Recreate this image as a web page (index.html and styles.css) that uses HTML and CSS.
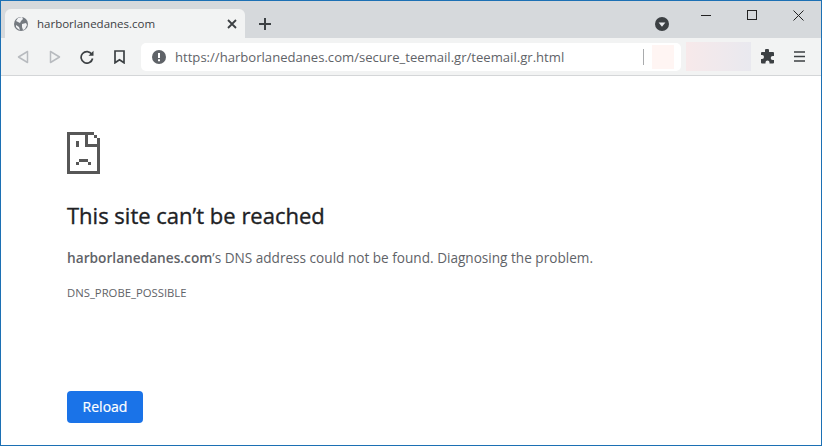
FILE: index.html
```
<!DOCTYPE html>
<html lang="en">
<head>
<meta charset="utf-8">
<title>harborlanedanes.com</title>
<link rel="stylesheet" href="styles.css">
</head>
<body>
<div class="window">
  <header class="titlebar">
    <div class="tab">
      <svg class="tab-globe" width="16" height="16" viewBox="0 0 16 16"><circle cx="8" cy="8" r="7" fill="#757a80"/><path d="M3 5l2-3 4-1 1 2-2 2-1 2-2-1zM9 8l4-1 1 2-2 4-2 1-1-3zM3 9l3 2 1 3-2-1-2-2z" fill="#f2f3f5"/></svg>
      <span class="tab-title">harborlanedanes.com</span>
      <svg class="tab-close" width="10" height="10" viewBox="0 0 10 10"><path d="M1 1l8 8M9 1l-8 8" stroke="#3c4043" stroke-width="1.8" fill="none"/></svg>
    </div>
    <svg class="new-tab" width="14" height="14" viewBox="0 0 14 14"><path d="M7 1v12M1 7h12" stroke="#3c4043" stroke-width="2" fill="none"/></svg>
    <svg class="profile-drop" width="14" height="14" viewBox="0 0 14 14"><circle cx="7" cy="7" r="7" fill="#3c4043"/><path d="M3.6 5.4h6.8L7 9.8z" fill="#e8eaed"/></svg>
    <div class="win-controls">
      <svg width="10" height="10" viewBox="0 0 10 10"><path d="M0 5.5h10" stroke="#222" fill="none"/></svg>
      <svg width="10" height="10" viewBox="0 0 10 10"><rect x=".5" y=".5" width="9" height="9" stroke="#222" fill="none"/></svg>
      <svg width="11" height="11" viewBox="0 0 11 11"><path d="M.5.5l10 10M10.500.5l-10 10" stroke="#222" fill="none"/></svg>
    </div>
  </header>
  <nav class="toolbar">
    <svg class="tool tool-back" width="12" height="14" viewBox="0 0 12 14"><path d="M10.500 1.500v11L1.500 7z" stroke="#b8bbbf" stroke-width="1.500" fill="none" stroke-linejoin="round"/></svg>
    <svg class="tool tool-forward" width="12" height="14" viewBox="0 0 12 14"><path d="M1.500 1.500v11l9-5.500z" stroke="#b8bbbf" stroke-width="1.500" fill="none" stroke-linejoin="round"/></svg>
    <svg class="tool tool-reload" width="14" height="14" viewBox="0 0 14 14"><path d="M11.800 4.200A5.800 5.800 0 1 0 12.600 8.500" stroke="#3c4043" stroke-width="1.700" fill="none"/><path d="M13.500 .8v5h-5z" fill="#3c4043"/></svg>
    <svg class="tool tool-bookmark" width="11" height="14" viewBox="0 0 11 14"><path d="M1 1h9v11.800L5.500 9.800 1 12.800z" stroke="#3c4043" stroke-width="1.700" fill="none"/></svg>
    <div class="omnibox">
      <svg class="info" width="14" height="14" viewBox="0 0 14 14"><circle cx="7" cy="7" r="7" fill="#5f6368"/><path d="M6 3h2v5H6zM6 9.300h2v2H6z" fill="#fff"/></svg>
      <span class="url">https://harborlanedanes.com/secure_teemail.gr/teemail.gr.html</span>
      <span class="omni-sep"></span>
      <span class="omni-blur"></span>
    </div>
    <div class="ext-blur"></div>
    <svg class="tool-puzzle" width="15" height="15" viewBox="0 0 15 15"><path d="M5 1.500a2 2 0 0 1 4 0V3h4a1 1 0 0 1 1 1v3h-1.300a2 2 0 0 0 0 4H14v2.500a1 1 0 0 1-1 1H9.500v-1a2 2 0 0 0-4 0v1H2a1 1 0 0 1-1-1V10h1a2 2 0 0 0 0-4H1V4a1 1 0 0 1 1-1h3z" fill="#3c4043"/></svg>
    <svg class="tool-menu" width="11" height="11" viewBox="0 0 11 11"><path d="M0 1h11M0 5.500h11M0 10h11" stroke="#3c4043" stroke-width="1.600" fill="none"/></svg>
  </nav>
  <main class="page">
    <svg class="sad-doc" width="33" height="42" viewBox="0 0 11 14" shape-rendering="crispEdges">
      <path fill="#575757" d="M0 0h9v1H7v3h3V2h1v12H0zM1 1v12h9V5H6V1zM9 1h1v1H9zM3 3h1v2H3zM4 9h3v1H4zM3 10h1v1H3zM7 10h1v1H7z" fill-rule="evenodd"/>
    </svg>
    <h1 class="headline">This site can’t be reached</h1>
    <p class="message"><strong>harborlanedanes.com</strong>’s DNS address could not be found. Diagnosing the problem.</p>
    <p class="code">DNS_PROBE_POSSIBLE</p>
    <button class="reload" type="button">Reload</button>
  </main>
</div>
</body>
</html>
```
FILE: styles.css
```
* { box-sizing: border-box; }
html, body { margin: 0; height: 100%; }
body { font-family: "Open Sans", "Noto Sans", sans-serif; background: #fff; overflow: hidden; }
.window { width: 822px; height: 446px; border: 1px solid #1c70b4; display: flex; flex-direction: column; background: #fff; }
.titlebar { height: 37px; background: #d6d9dc; display: flex; align-items: flex-start; flex: none; }
.tab { width: 240px; height: 29px; margin: 8px 0 0 4px; background: #f2f3f3; border-radius: 6px 6px 0 0; display: flex; align-items: center; padding-left: 8px; padding-right: 8px; }
.tab-title { font-size: 11.5px; color: #3c4043; margin-left: 8px; flex: 1; white-space: nowrap; }
.tab-close { flex: none; }
.new-tab { margin: 16px 0 0 13px; flex: none; }
.profile-drop { margin: 16px 0 0 383px; flex: none; }
.win-controls { margin: 9px 0 0 32px; display: flex; gap: 36px; align-items: flex-start; }
.toolbar { height: 38px; flex: none; background: #f2f3f3; border-bottom: 1px solid #d4d6d8; display: flex; align-items: center; padding-left: 16px; }
.tool { flex: none; }
.tool-forward { margin-left: 20px; }
.tool-reload { margin-left: 19px; }
.tool-bookmark { margin-left: 20px; }
.omnibox { width: 540px; height: 28px; margin-left: 16px; background: #fff; border-radius: 5px; display: flex; align-items: center; padding-left: 11px; flex: none; }
.url { font-size: 13.1px; color: #5f6368; margin-left: 9px; width: 468px; white-space: nowrap; }
.omni-sep { width: 1px; height: 16px; background: #a9abad; flex: none; }
.omni-blur { width: 22px; height: 24px; margin-left: 8px; background: #fff5f3; flex: none; }
.ext-blur { width: 65px; height: 29px; margin-left: 5px; background: linear-gradient(90deg, #f7e9ea, #e9e9ef); flex: none; }
.tool-puzzle { margin-left: 9px; flex: none; }
.tool-menu { margin-left: 19px; flex: none; }
.page { flex: 1; padding: 56px 0 0 66px; display: flex; flex-direction: column; align-items: flex-start; }
.sad-doc { display: block; flex: none; }
.headline { font-size: 22px; font-weight: 400; -webkit-text-stroke: 0.35px #202124; color: #202124; margin: 25px 0 0; line-height: 32px; }
.message { font-size: 13.6px; color: #5f6368; margin: 17px 0 0; line-height: 20px; }
.message strong { font-size: 13.7px; font-weight: 600; }
.code { font-size: 11.3px; color: #5f6368; margin: 17px 0 0; line-height: 16px; }
.reload { margin-top: 90px; width: 76px; height: 32px; padding: 0 0 2px; background: #1a73e8; color: #fff; border: 0; border-radius: 4px; font: 400 14px "Open Sans", sans-serif; -webkit-text-stroke: 0.2px #fff; }
```
